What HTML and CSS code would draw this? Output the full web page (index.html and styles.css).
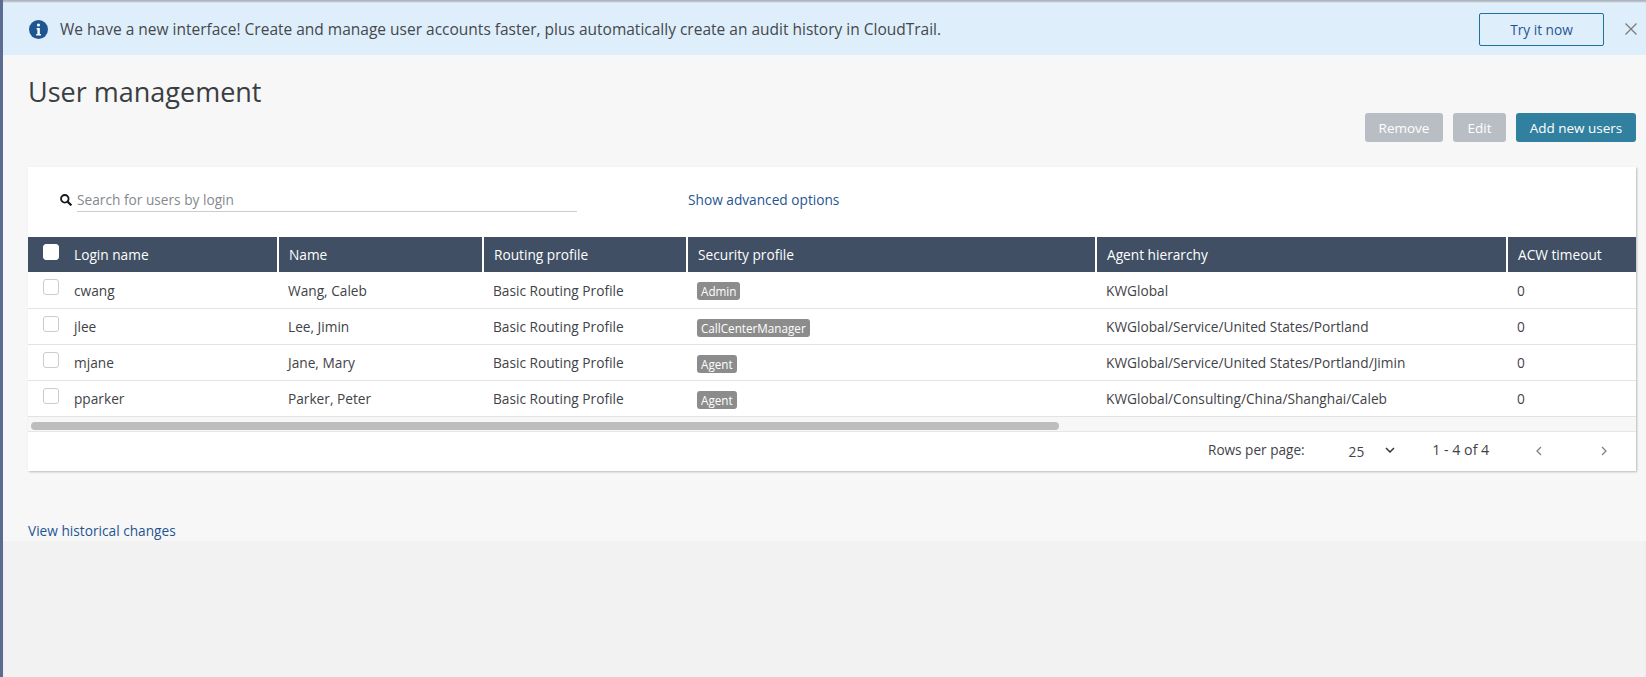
FILE: index.html
```html
<!DOCTYPE html>
<html>
<head>
    <title>User management</title>
    <link rel="stylesheet" href="styles.css">
</head>
<body>
    <div class="banner">
        <svg class="info-icon" width="19" height="19" viewBox="0 0 19 19">
            <circle cx="9.5" cy="9.5" r="9.5" fill="#1f5593"/>
            <circle cx="9.5" cy="5" r="1.6" fill="#fff"/>
            <path d="M7.6 8h3.2v6h1.2v1.4H7.2V14h1.2V9.4H7.6z" fill="#fff"/>
        </svg>
        <p class="banner-text">We have a new interface! Create and manage user accounts faster, plus automatically create an audit history in CloudTrail.</p>
        <button class="try-btn">Try it now</button>
        <svg class="close-icon" width="12" height="12" viewBox="0 0 12 12">
            <path d="M0.5 0.5L11.5 11.5M11.5 0.5L0.5 11.5" stroke="#7b7b7b" stroke-width="1.3" fill="none"/>
        </svg>
    </div>

    <div class="main">
        <h1 class="title">User management</h1>
        <div class="actions">
            <button class="btn btn-disabled btn-remove">Remove</button>
            <button class="btn btn-disabled btn-edit">Edit</button>
            <button class="btn btn-primary">Add new users</button>
        </div>

        <div class="card">
            <div class="search-row">
                <svg class="search-icon" width="12" height="12" viewBox="0 0 12 12">
                    <circle cx="4.8" cy="4.8" r="3.8" stroke="#16191f" stroke-width="1.8" fill="none"/>
                    <path d="M7.6 7.6L11.4 11.4" stroke="#16191f" stroke-width="2.2" fill="none"/>
                </svg>
                <div class="search-box">Search for users by login</div>
                <a class="link advanced">Show advanced options</a>
            </div>

            <div class="table-wrap">
                <table class="users">
                    <colgroup>
                        <col class="col-login">
                        <col class="col-name">
                        <col class="col-routing">
                        <col class="col-security">
                        <col class="col-agent">
                        <col class="col-acw">
                    </colgroup>
                    <thead>
                        <tr>
                            <th><span class="check check-head"></span>Login name</th>
                            <th>Name</th>
                            <th>Routing profile</th>
                            <th>Security profile</th>
                            <th>Agent hierarchy</th>
                            <th>ACW timeout</th>
                        </tr>
                    </thead>
                    <tbody>
                        <tr>
                            <td><span class="check"></span>cwang</td>
                            <td>Wang, Caleb</td>
                            <td>Basic Routing Profile</td>
                            <td><span class="tag">Admin</span></td>
                            <td>KWGlobal</td>
                            <td>0</td>
                        </tr>
                        <tr>
                            <td><span class="check"></span>jlee</td>
                            <td>Lee, Jimin</td>
                            <td>Basic Routing Profile</td>
                            <td><span class="tag">CallCenterManager</span></td>
                            <td>KWGlobal/Service/United States/Portland</td>
                            <td>0</td>
                        </tr>
                        <tr>
                            <td><span class="check"></span>mjane</td>
                            <td>Jane, Mary</td>
                            <td>Basic Routing Profile</td>
                            <td><span class="tag">Agent</span></td>
                            <td>KWGlobal/Service/United States/Portland/Jimin</td>
                            <td>0</td>
                        </tr>
                        <tr>
                            <td><span class="check"></span>pparker</td>
                            <td>Parker, Peter</td>
                            <td>Basic Routing Profile</td>
                            <td><span class="tag">Agent</span></td>
                            <td>KWGlobal/Consulting/China/Shanghai/Caleb</td>
                            <td>0</td>
                        </tr>
                    </tbody>
                </table>
            </div>
            <div class="scroll-track"><div class="scroll-thumb"></div></div>

            <div class="pager">
                <span class="rows-label">Rows per page:</span>
                <span class="rows-value">25</span>
                <svg class="chev-down" width="10" height="6" viewBox="0 0 10 6">
                    <path d="M1 1L5 5L9 1" stroke="#33373c" stroke-width="1.5" fill="none"/>
                </svg>
                <span class="range">1 - 4 of 4</span>
                <svg class="chev-left" width="6" height="10" viewBox="0 0 6 10">
                    <path d="M5 1L1 5L5 9" stroke="#7d8288" stroke-width="1.3" fill="none"/>
                </svg>
                <svg class="chev-right" width="6" height="10" viewBox="0 0 6 10">
                    <path d="M1 1L5 5L1 9" stroke="#7d8288" stroke-width="1.3" fill="none"/>
                </svg>
            </div>
        </div>

        <a class="link history">View historical changes</a>
    </div>
</body>
</html>
```

FILE: styles.css
```css
* {
    box-sizing: border-box;
}
html, body {
    height: 100%;
}
body {
    margin: 0;
    padding-top: 3px;
    border-left: 3px solid #5a6d90;
    background-color: #f2f2f2;
    font-family: "Open Sans", Arial, sans-serif;
    font-size: 13.7px;
    color: #3f4347;
    overflow: hidden;
    box-shadow: inset 0 3px 2px -1px #a9b2bf;
}
.banner {
    display: flex;
    align-items: center;
    height: 52px;
    padding-left: 26px;
    background-color: #dfeefb;
}
.info-icon {
    flex: none;
}
.banner-text {
    flex: 1;
    margin: 0 0 0 12px;
    font-size: 15.5px;
    color: #44484d;
}
.try-btn {
    width: 125px;
    height: 33px;
    margin-right: 21px;
    border: 1px solid #1f6f9f;
    border-radius: 2px;
    background: transparent;
    color: #1f5593;
    font-family: inherit;
    font-size: 13.7px;
}
.close-icon {
    flex: none;
    margin-right: 9px;
}
.main {
    height: 486px;
    padding: 0 10px 0 25px;
    background-color: #f7f7f7;
}
.title {
    margin: 0;
    padding-top: 19px;
    height: 58px;
    font-size: 27px;
    line-height: 36px;
    font-weight: 400;
    color: #3a3e43;
}
.actions {
    display: flex;
    justify-content: flex-end;
    gap: 10px;
    height: 54px;
}
.btn {
    height: 29px;
    border: 0;
    border-radius: 3px;
    color: #fff;
    font-family: inherit;
    font-size: 13.5px;
}
.btn-disabled {
    background-color: #b9bec4;
}
.btn-remove {
    width: 78px;
}
.btn-edit {
    width: 53px;
}
.btn-primary {
    width: 120px;
    background-color: #32809f;
}
.card {
    background-color: #fff;
    box-shadow: 1px 1px 2px rgba(0,0,0,0.25);
}
.search-row {
    display: flex;
    align-items: center;
    height: 70px;
    padding-left: 32px;
    padding-bottom: 5px;
}
.search-icon {
    flex: none;
}
.search-box {
    width: 500px;
    height: 23px;
    margin-left: 5px;
    margin-top: 1px;
    line-height: 22px;
    border-bottom: 1px solid #ccc;
    color: #85898e;
}
.link {
    color: #1f5593;
}
.advanced {
    margin-left: 111px;
}
.table-wrap {
    overflow: hidden;
}
.users {
    width: 1690px;
    table-layout: fixed;
    border-collapse: collapse;
}
.col-login {
    width: 250px;
}
.col-name {
    width: 205px;
}
.col-routing {
    width: 204px;
}
.col-security {
    width: 409px;
}
.col-agent {
    width: 411px;
}
.users th {
    height: 35px;
    padding: 0 10px;
    background-color: #404f63;
    border-right: 2px solid #fff;
    color: #fff;
    font-weight: 400;
    text-align: left;
    white-space: nowrap;
}
.users td {
    height: 36px;
    padding: 1px 10px 0;
    border-bottom: 1px solid #e2e2e2;
    white-space: nowrap;
}
.users th:first-child, .users td:first-child {
    padding-left: 46px;
    position: relative;
}
.check {
    position: absolute;
    left: 15px;
    top: 7px;
    width: 16px;
    height: 16px;
    border: 1px solid #c9cdd1;
    border-radius: 3px;
    background-color: #fff;
}
.check-head {
    top: 7px;
    border-color: #fff;
}
.tag {
    display: inline-block;
    padding: 0 4px;
    height: 18px;
    line-height: 18px;
    border-radius: 3px;
    background-color: #8c8c8c;
    color: #fff;
    font-size: 11.7px;
    vertical-align: middle;
}
.scroll-track {
    height: 15px;
    padding: 5px 3px 0;
    background-color: #f7f7f7;
    border-bottom: 1px solid #e6e6e6;
}
.scroll-thumb {
    width: 1028px;
    height: 8px;
    border-radius: 4px;
    background-color: #bdbdbd;
}
.pager {
    display: flex;
    align-items: center;
    height: 39px;
    padding-bottom: 3px;
}
.rows-label {
    margin-left: 1180px;
    font-size: 13.6px;
}
.rows-value {
    margin-left: 44px;
    padding-top: 3px;
}
.chev-down {
    margin-left: 21px;
}
.range {
    margin-left: 37px;
    font-size: 14.2px;
}
.chev-left {
    margin-left: 47px;
    margin-top: 3px;
}
.chev-right {
    margin-left: 59px;
    margin-top: 3px;
}
.history {
    display: block;
    margin-top: 50px;
}
```
